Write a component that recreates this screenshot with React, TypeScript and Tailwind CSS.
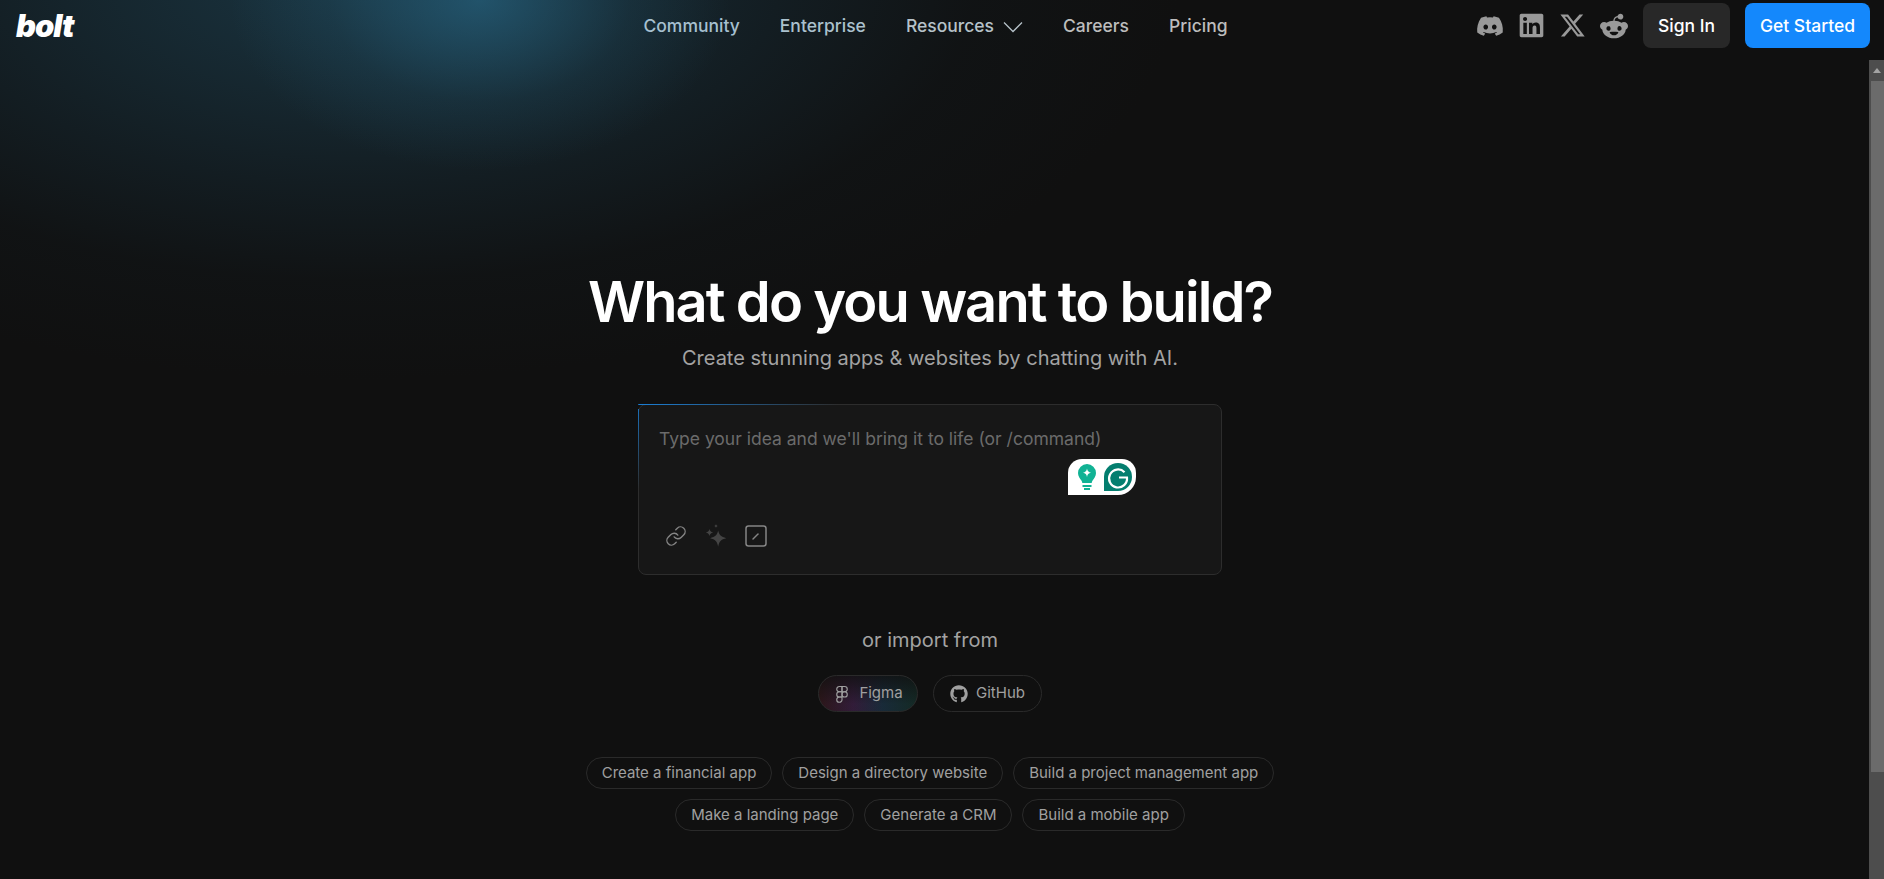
import React from "react";
import { Figma, Link } from "lucide-react";
import { FaDiscord, FaGithub, FaLinkedin, FaRedditAlien, FaXTwitter } from "react-icons/fa6";

const navLinks = [
  { label: "Community", color: "text-[#a6c0d0]" },
  { label: "Enterprise", color: "text-[#abc1cd]" },
  { label: "Resources", color: "text-[#b6c2c9]", chevron: true },
  { label: "Careers", color: "text-[#bdbdbd]" },
  { label: "Pricing", color: "text-[#bdbdbd]" },
];

const promptRows = [
  ["Create a financial app", "Design a directory website", "Build a project management app"],
  ["Make a landing page", "Generate a CRM", "Build a mobile app"],
];

function NavChevron() {
  return (
    <svg width="20" height="12" viewBox="0 0 20 12" fill="none" stroke="currentColor" strokeWidth="1.25">
      <path d="M1 1.500l9 9 9-9" />
    </svg>
  );
}

function SparkleIcon() {
  return (
    <svg width="24" height="26" viewBox="0 0 22 24" fill="#444444">
      <path d="M13 7c.8 4 2.600 6 7.500 7-4.900 1-6.700 3-7.500 8-.8-5-2.600-7-7.500-8 4.900-1 6.700-3 7.500-7z" />
      <path d="M5 5.500c.4 1.800 1.200 2.700 3.400 3.200C6.200 9.200 5.400 10.100 5 12c-.4-1.900-1.200-2.800-3.400-3.300C3.800 8.200 4.600 7.300 5 5.500z" />
      <path d="M11 1c.2 1 .7 1.500 1.800 1.800C11.700 3 11.200 3.600 11 4.700c-.2-1.100-.7-1.700-1.800-1.900C10.300 2.500 10.800 2 11 1z" />
    </svg>
  );
}

function SlashIcon() {
  return (
    <svg width="22" height="22" viewBox="0 0 22 22" fill="none" stroke="#858585" strokeWidth="1.5">
      <rect x="1" y="1" width="20" height="20" rx="2.500" />
      <path d="M8 14l5-5" strokeLinecap="round" />
    </svg>
  );
}

function GrammarlyBadge() {
  return (
    <div className="absolute left-[429px] top-[54px] flex h-[36px] w-[68px] items-center gap-[7px] rounded-t-[14px] rounded-br-[18px] bg-white pl-[9px]">
      <svg width="20" height="28" viewBox="0 0 20 28" fill="#11b294">
        <path d="M10 1a9 9 0 0 1 9 9c0 3.500-2 5.500-3.400 7.500-.6.900-.8 1.800-.9 2.500H5.300c-.1-.7-.3-1.600-.9-2.500C3 15.500 1 13.500 1 10a9 9 0 0 1 9-9z" />
        <path d="M5.500 22h9v2h-9zM7 25h6v2H7z" />
        <path d="M10 5.500c.4 2.500 1.500 3.700 4 4.200-2.500.5-3.600 1.700-4 4.300-.4-2.600-1.500-3.800-4-4.300 2.500-.5 3.600-1.700 4-4.200z" fill="#ffffff" />
      </svg>
      <svg width="28" height="28" viewBox="0 0 28 28">
        <path d="M14 0a14 14 0 0 1 0 28H0V14A14 14 0 0 1 14 0z" fill="#037e6f" />
        <path d="M20.500 9.200A9 9 0 1 0 23 14.500H15" fill="none" stroke="#ffffff" strokeWidth="2.200" />
      </svg>
    </div>
  );
}

export default function App() {
  return (
    <div className="relative flex h-[879px] flex-col overflow-hidden bg-[#101010] font-['Inter',sans-serif]">
      {/* glow behind the header */}
      <div className="pointer-events-none absolute left-[-460px] top-[-420px] h-[800px] w-[1640px] bg-[radial-gradient(closest-side,rgba(33,80,102,0.58),rgba(26,58,74,0.32)_50%,rgba(18,28,33,0.24)_75%,rgba(16,16,16,0)_100%)]" />
      <div className="pointer-events-none absolute left-[230px] top-[-170px] h-[340px] w-[500px] bg-[radial-gradient(closest-side,rgba(41,110,143,0.58),rgba(41,110,143,0.14)_60%,rgba(16,16,16,0)_100%)]" />

      <header className="relative flex h-[60px] shrink-0 items-start justify-between pl-[16px] pr-[14px] pt-[3px]">
        <span className="mt-[5px] w-[385px] text-[31px] font-black italic leading-[36px] tracking-[-1px] text-white">bolt</span>
        <nav className="flex h-[47px] items-center gap-[40px] text-[17.5px] font-medium">
          {navLinks.map((link) => (
            <span key={link.label} className={`flex items-center gap-[9px] ${link.color}`}>
              {link.label}
              {link.chevron && <NavChevron />}
            </span>
          ))}
        </nav>
        <div className="flex h-[45px] w-[400px] items-center justify-end">
          <div className="flex items-center gap-[14px] text-[#999999]">
            <FaDiscord size={28} />
            <FaLinkedin size={27} />
            <FaXTwitter size={27} />
            <FaRedditAlien size={28} />
          </div>
          <button className="ml-[15px] h-[45px] w-[87px] rounded-[8px] bg-[#282828] pt-[1px] text-[17.5px] font-medium text-white">Sign In</button>
          <button className="ml-[15px] h-[45px] w-[125px] rounded-[8px] bg-[#1488fc] pt-[1px] text-[17.5px] font-medium text-white">Get Started</button>
        </div>
      </header>

      <div className="relative flex min-h-0 flex-1">
        <main className="flex flex-1 flex-col items-center pr-[9px] pt-[206px]">
          <h1 className="text-[56px] font-semibold leading-[72px] tracking-[-1.9px] text-white">What do you want to build?</h1>
          <p className="mt-[6px] text-[20px] leading-[28px] text-[#a3a3a3]">Create stunning apps &amp; websites by chatting with AI.</p>

          <div className="relative mt-[32px] h-[171px] w-[584px] rounded-[8px] border border-[#2d2d2d] bg-[#171717]">
            <div className="absolute left-[-1px] top-[-1px] h-[1px] w-[200px] rounded-tl-[8px] bg-gradient-to-r from-[#1b7fd6] to-transparent" />
            <div className="absolute left-[-1px] top-[4px] h-[80px] w-[1px] bg-gradient-to-b from-[#1b6fb8] to-transparent" />
            <p className="pl-[20px] pt-[21px] text-[17.5px] leading-[26px] text-[#6b6b6b]">Type your idea and we'll bring it to life (or /command)</p>
            <GrammarlyBadge />
            <div className="absolute bottom-[25px] left-[26px] flex items-center gap-[17px]">
              <Link size={22} strokeWidth={1.5} className="text-[#858585]" />
              <SparkleIcon />
              <SlashIcon />
            </div>
          </div>

          <p className="mt-[52px] text-[20px] leading-[26px] text-[#a3a3a3]">or import from</p>

          <div className="mt-[22px] flex gap-[15px] text-[15px] text-[#a0a0a0]">
            <div className="flex h-[37px] w-[100px] items-center justify-center gap-[8px] rounded-full border border-[#2a2a2a] bg-[linear-gradient(180deg,rgba(16,16,16,0.8),rgba(16,16,16,0.1)_80%),linear-gradient(90deg,rgba(120,40,50,0.3),rgba(110,50,130,0.4)_35%,rgba(40,90,130,0.4)_65%,rgba(30,110,90,0.3))]">
              <Figma size={18} strokeWidth={1.5} />
              Figma
            </div>
            <div className="flex h-[37px] w-[109px] items-center justify-center gap-[8px] rounded-full border border-[#2a2a2a]">
              <FaGithub size={18} />
              GitHub
            </div>
          </div>

          <div className="mt-[45px] flex flex-col items-center gap-[10px]">
            {promptRows.map((row) => (
              <div key={row[0]} className="flex gap-[10px]">
                {row.map((prompt) => (
                  <span key={prompt} className="flex h-[32px] items-center rounded-full border border-[#2a2a2a] px-[15px] text-[15px] text-[#a0a0a0]">
                    {prompt}
                  </span>
                ))}
              </div>
            ))}
          </div>
        </main>

        {/* page scrollbar */}
        <div className="flex w-[15px] shrink-0 flex-col bg-[#4d4d4d]">
          <div className="flex h-[21px] items-center justify-center">
            <div className="h-0 w-0 border-x-[4px] border-b-[5px] border-x-transparent border-b-[#a3a3a3]" />
          </div>
          <div className="ml-[2px] h-[691px] bg-[#6b6b6b]" />
        </div>
      </div>
    </div>
  );
}
